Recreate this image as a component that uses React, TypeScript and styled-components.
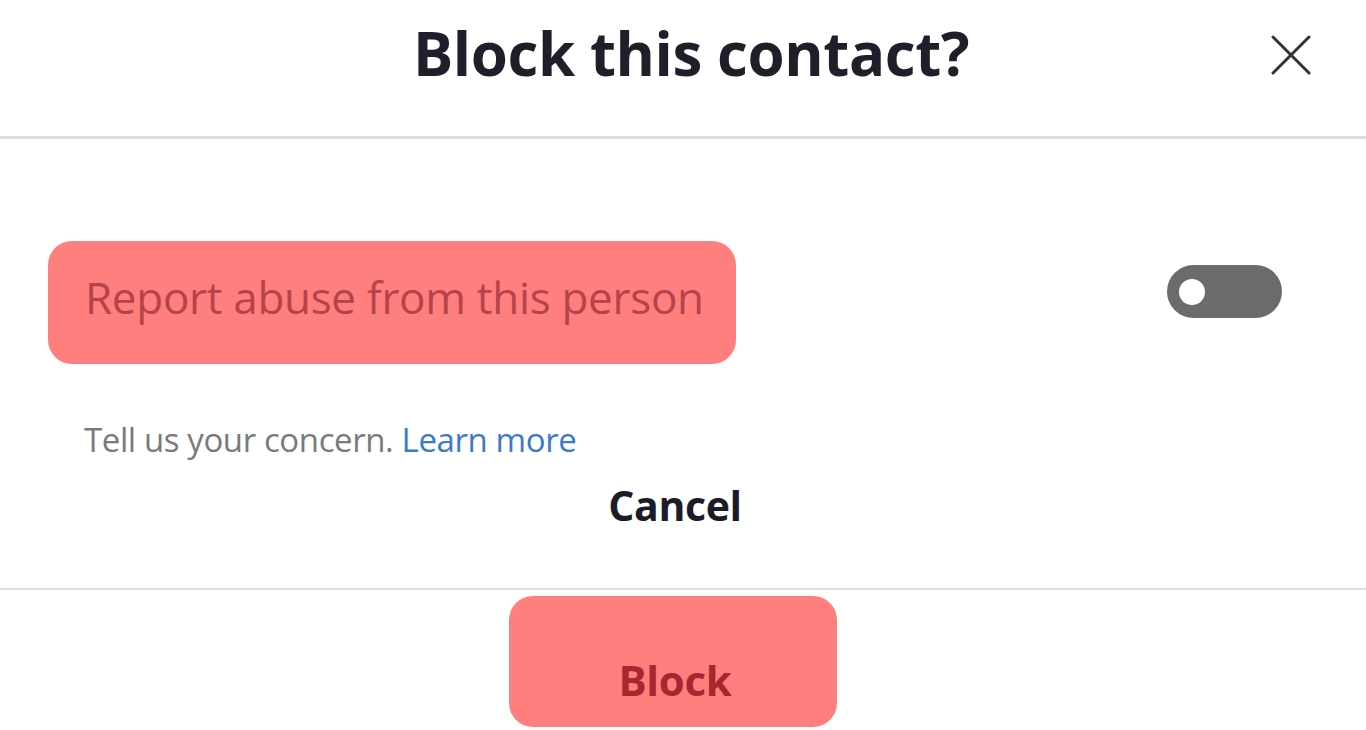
import React from "react";
import styled, { createGlobalStyle } from "styled-components";

const Global = createGlobalStyle`
  html, body { margin: 0; padding: 0; background: #ffffff; }
  body { font-family: "Open Sans", "Noto Sans", sans-serif; overflow: hidden; }
  * { box-sizing: border-box; }
`;

const Dialog = styled.div`
  width: 1366px;
  height: 730px;
  display: flex;
  flex-direction: column;
  background: #ffffff;
`;

const Header = styled.header`
  height: 139px;
  display: grid;
  grid-template-columns: 1fr auto 1fr;
  align-items: start;
  padding: 12px 0 0 16px;
  border-bottom: 3px solid #dedede;
`;

const Title = styled.h1`
  grid-column: 2;
  margin: 0;
  font-family: "Open Sans", sans-serif;
  font-weight: 700;
  font-size: 60px;
  line-height: 82px;
  color: #1f1f2b;
  letter-spacing: -0.4px;
`;

const CloseButton = styled.button`
  grid-column: 3;
  justify-self: end;
  margin: 22px 54px 0 0;
  width: 42px;
  height: 42px;
  padding: 0;
  border: none;
  background: transparent;
  display: flex;
  align-items: center;
  justify-content: center;
  cursor: pointer;
`;

const Body = styled.section`
  flex: 1;
  display: flex;
  flex-direction: column;
  padding: 102px 84px 0 48px;
  border-bottom: 2px solid #e0e0e0;
`;

const OptionRow = styled.div`
  display: flex;
  justify-content: space-between;
  align-items: flex-start;
`;

const HighlightLabel = styled.div`
  height: 123px;
  width: 688px;
  padding: 0 0 12px 37px;
  display: flex;
  align-items: center;
  border-radius: 24px;
  background: #ff7f7f;
  color: #b5434a;
  font-size: 44px;
  font-weight: 400;
  letter-spacing: -0.3px;
`;

const Toggle = styled.div`
  margin-top: 24px;
  width: 115px;
  height: 53px;
  border-radius: 27px;
  background: #6b6b6b;
  display: flex;
  align-items: center;
  padding-left: 12px;
`;

const Knob = styled.span`
  width: 26px;
  height: 26px;
  border-radius: 50%;
  background: #ffffff;
`;

const Helper = styled.p`
  margin: 56px 0 0 36px;
  font-size: 33px;
  line-height: 40px;
  color: #7a7a7a;
  letter-spacing: -0.4px;
`;

const LearnLink = styled.a`
  color: #3d79c9;
  text-decoration: none;
`;

const CancelButton = styled.button`
  align-self: center;
  margin: 20px 0 0 20px;
  padding: 0;
  border: none;
  background: transparent;
  font-family: "Open Sans", sans-serif;
  font-size: 41px;
  font-weight: 700;
  line-height: 50px;
  color: #1c1c28;
  letter-spacing: -0.4px;
  cursor: pointer;
`;

const Footer = styled.footer`
  height: 140px;
  display: flex;
  padding: 6px 0 0 509px;
`;

const BlockButton = styled.button`
  width: 328px;
  height: 131px;
  border: none;
  border-radius: 24px;
  background: #ff7f7f;
  color: #a8262e;
  font-family: "Open Sans", sans-serif;
  font-size: 42px;
  font-weight: 700;
  padding: 36px 0 0 4px;
  letter-spacing: -0.3px;
  cursor: pointer;
`;

export default function App() {
  return (
    <>
      <Global />
      <Dialog>
        <Header>
          <Title>Block this contact?</Title>
          <CloseButton aria-label="Close">
            <svg width="40" height="40" viewBox="0 0 40 40" fill="none">
              <path d="M2 2 L38 38 M38 2 L2 38" stroke="#333" strokeWidth="3" strokeLinecap="round" />
            </svg>
          </CloseButton>
        </Header>
        <Body>
          <OptionRow>
            <HighlightLabel>Report abuse from this person</HighlightLabel>
            <Toggle role="switch" aria-checked="false">
              <Knob />
            </Toggle>
          </OptionRow>
          <Helper>
            Tell us your concern. <LearnLink href="#">Learn more</LearnLink>
          </Helper>
          <CancelButton>Cancel</CancelButton>
        </Body>
        <Footer>
          <BlockButton>Block</BlockButton>
        </Footer>
      </Dialog>
    </>
  );
}
